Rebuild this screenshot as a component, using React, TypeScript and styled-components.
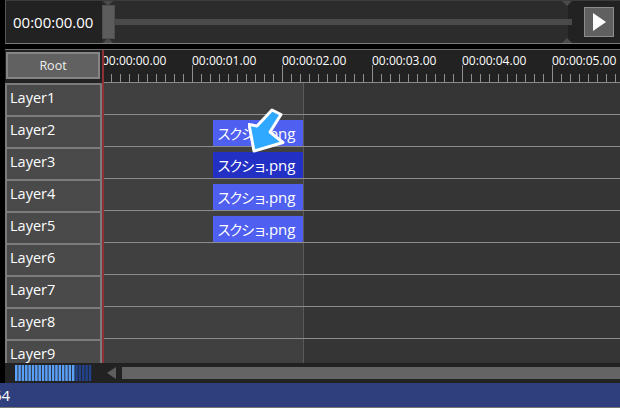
import React from "react";
import styled, { createGlobalStyle } from "styled-components";

const Global = createGlobalStyle`
  html, body { margin: 0; padding: 0; background: #000; overflow: hidden; }
  #root { width: 620px; height: 408px; }
  * { box-sizing: border-box; }
`;

const Page = styled.div`
  width: 620px; height: 408px; display: flex; flex-direction: column;
  font-family: "Open Sans", "Noto Sans CJK JP", sans-serif; color: #fff; background: #000; overflow: hidden;
`;
const Main = styled.div`
  flex: 1; min-height: 0; display: flex; flex-direction: column; padding-left: 5px;
`;
const TopBar = styled.div`
  height: 44px; flex: none; display: flex; background: #222; border-top: 1px solid #3c3c3c; border-bottom: 1px solid #7a7a7a; border-left: 1px solid #555;
`;
const TimeLabel = styled.div`
  width: 96px; flex: none; font-size: 15px; line-height: 43px; padding-left: 7px; white-space: nowrap;
`;
const Seek = styled.div`
  position: relative; flex: 1; display: flex; align-items: center; background: #2c2c2c;
`;
const SeekTrack = styled.div`
  height: 6px; flex: 1; background: #4a4a4a; margin-right: -4px; position: relative; z-index: 1;
`;
const SeekThumb = styled.div`
  width: 13px; height: 34px; background: #5c5c5c; border: 1px solid #4e4e4e; flex: none;
`;
const Notch = styled.div<{ $bottom?: boolean; $x: number }>`
  position: absolute; left: ${(p) => p.$x}px; ${(p) => (p.$bottom ? "bottom: 0;" : "top: 0;")}
  width: 0; height: 0; border-left: 5px solid transparent; border-right: 5px solid transparent;
  ${(p) => (p.$bottom ? "border-bottom" : "border-top")}: 5px solid #4a4a4a;
`;
const PlayArea = styled.div`
  width: 52px; flex: none; display: flex; align-items: center; background: #222; padding-left: 16px;
`;
const PlayButton = styled.div`
  width: 30px; height: 30px; margin-top: -1px; background: #606060; border: 1px solid #8c8c8c; display: flex; align-items: center; justify-content: center;
`;
const Timeline = styled.div`
  position: relative; margin-top: 5px; flex: 1; min-height: 0; display: flex; flex-direction: column; overflow: hidden; border-top: 1px solid #6e6e6e;
`;
const RulerRow = styled.div`
  height: 33px; flex: none; display: flex; background: #222;
`;
const RootCell = styled.div`
  width: 97px; flex: none; padding: 2px 2px 3px 1px;
`;
const RootButton = styled.div`
  height: 27px; background: #616161; border: 2px solid #858585; font-size: 12.5px; color: #eee; display: flex; align-items: center; justify-content: center;
`;
const Ruler = styled.div`
  position: relative; flex: 1; border-bottom: 1px solid #8a8a8a;
`;
const TickSvg = styled.svg`
  position: absolute; left: 0; bottom: 0; display: block;
`;
const RulerLabel = styled.span<{ $x: number }>`
  position: absolute; top: 3px; left: ${(p) => p.$x}px; font-size: 12px; line-height: 16px; white-space: nowrap;
`;
const Rows = styled.div`
  flex: 1; min-height: 0; display: flex; flex-direction: column;
`;
const Row = styled.div`
  height: 32px; flex: none; display: flex; border-bottom: 1px solid #8c8c8c;
`;
const LayerName = styled.div`
  width: 97px; flex: none; background: #4a4a4a; border: 2px solid #7c7c7c; border-width: 2px 2px 0 2px; font-size: 14.5px; line-height: 26px; padding-left: 3px; margin-bottom: -1px; position: relative; z-index: 1;
`;
const Track = styled.div`
  flex: 1; display: flex; align-items: flex-end; background: linear-gradient(to right, #404040 201px, #5a5a5a 201px, #5a5a5a 202px, #353535 202px);
`;
const Clip = styled.div<{ $active?: boolean }>`
  width: 90px; height: 26px; margin-left: 111px; background: ${(p) => (p.$active ? "#2330c4" : "#4f5ff0")};
  font-size: 15px; line-height: 26px; padding-left: 4px; white-space: nowrap; overflow: hidden;
`;
const Kana = styled.span`
  font-size: 14px; letter-spacing: -2px;
`;
const PlayHead = styled.div`
  position: absolute; left: 97px; top: 0; bottom: 0; width: 2px; background: #8e3036;
`;
const Arrow = styled.svg`
  position: absolute; left: 243px; top: 57px; display: block;
`;
const ScrollRow = styled.div`
  height: 20px; flex: none; display: flex; align-items: center; background: #222; position: relative; z-index: 2; padding-left: 10px;
`;
const Meter = styled.svg`
  display: block; flex: none;
`;
const ScrollArrow = styled.div`
  width: 0; height: 0; margin-left: 15px; border-top: 6px solid transparent; border-bottom: 6px solid transparent; border-right: 9px solid #5e5e5e; flex: none;
`;
const ScrollThumb = styled.div`
  flex: 1; height: 12px; margin-left: 6px; background: #646464;
`;
const StatusBar = styled.div`
  height: 25px; flex: none; background: #2f3e7c; border-bottom: 1px solid #777; font-size: 15px; line-height: 24px; text-indent: -7px; overflow: hidden;
`;

const labels = ["00:00:00.00", "00:00:01.00", "00:00:02.00", "00:00:03.00", "00:00:04.00", "00:00:05.00"];
const layers = ["Layer1", "Layer2", "Layer3", "Layer4", "Layer5", "Layer6", "Layer7", "Layer8", "Layer9"];
const clips: Record<number, boolean> = { 1: false, 2: true, 3: false, 4: false };

export default function App() {
  const ticks = Array.from({ length: 60 }, (_, i) => i);
  const bars = Array.from({ length: 23 }, (_, i) => i);
  return (
    <Page>
      <Global />
      <Main>
        <TopBar>
          <TimeLabel>00:00:00.00</TimeLabel>
          <Seek>
            <SeekThumb />
            <SeekTrack />
            <Notch $x={1} />
            <Notch $x={1} $bottom />
            <Notch $x={460} />
            <Notch $x={460} $bottom />
          </Seek>
          <PlayArea>
            <PlayButton>
              <svg width="13" height="18" viewBox="0 0 13 18"><path d="M0 0L13 9L0 18Z" fill="#fff" /></svg>
            </PlayButton>
          </PlayArea>
        </TopBar>
        <Timeline>
          <RulerRow>
            <RootCell><RootButton>Root</RootButton></RootCell>
            <Ruler>
              <TickSvg width="518" height="17" viewBox="0 0 518 17">
                {ticks.map((i) => (
                  <line key={i} x1={9 * i + 0.5} x2={9 * i + 0.5} y1={i % 10 === 0 ? 0 : 9} y2={17} stroke="#8f8f8f" />
                ))}
              </TickSvg>
              {labels.map((l, i) => (
                <RulerLabel key={l} $x={i * 90}>{l}</RulerLabel>
              ))}
            </Ruler>
          </RulerRow>
          <Rows>
            {layers.map((l, i) => (
              <Row key={l}>
                <LayerName>{l}</LayerName>
                <Track>
                  {i in clips && <Clip $active={clips[i]}><Kana>スクショ</Kana>.png</Clip>}
                </Track>
              </Row>
            ))}
          </Rows>
          <PlayHead />
          <Arrow width="46" height="50" viewBox="0 0 46 50">
            <path d="M24 3L33 7.5L22 25L35 35.5L6 44L1 17.5L9 19Z" fill="#2fa8ff" stroke="#fff" strokeWidth="3" strokeLinejoin="round" />
          </Arrow>
        </Timeline>
        <ScrollRow>
          <Meter width="77" height="16" viewBox="0 0 77 16">
            {bars.map((i) => (
              <rect key={i} x={i * 3.35} y="0" width="2.5" height="16" fill={i < 18 ? "#5a9ff8" : "#23448c"} />
            ))}
          </Meter>
          <ScrollArrow />
          <ScrollThumb />
        </ScrollRow>
      </Main>
      <StatusBar>64</StatusBar>
    </Page>
  );
}
